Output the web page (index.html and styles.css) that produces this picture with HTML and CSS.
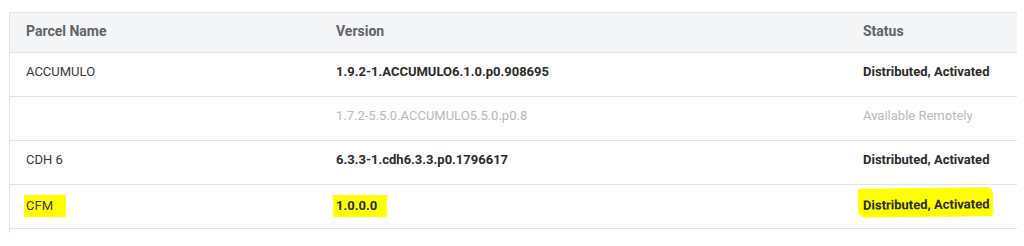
FILE: index.html
```html
<!DOCTYPE html>
<html>
<head>
<meta charset="utf-8">
<link rel="stylesheet" href="styles.css">
</head>
<body>
<div class="table">
  <div class="row head">
    <div class="cell">Parcel Name</div>
    <div class="cell">Version</div>
    <div class="cell">Status</div>
  </div>
  <div class="row">
    <div class="cell">ACCUMULO</div>
    <div class="cell strong">1.9.2-1.ACCUMULO6.1.0.p0.908695</div>
    <div class="cell strong">Distributed, Activated</div>
  </div>
  <div class="row muted">
    <div class="cell"></div>
    <div class="cell">1.7.2-5.5.0.ACCUMULO5.5.0.p0.8</div>
    <div class="cell">Available Remotely</div>
  </div>
  <div class="row">
    <div class="cell">CDH 6</div>
    <div class="cell strong">6.3.3-1.cdh6.3.3.p0.1796617</div>
    <div class="cell strong">Distributed, Activated</div>
  </div>
  <div class="row">
    <div class="cell"><span class="hl hl-name">CFM</span></div>
    <div class="cell strong"><span class="hl hl-ver">1.0.0.0</span></div>
    <div class="cell strong"><span class="hl hl-status">Distributed, Activated</span></div>
  </div>
  <div class="row tail"></div>
</div>
</body>
</html>
```

FILE: styles.css
```css
html, body {
  margin: 0;
  padding: 0;
  background: #ffffff;
}
body {
  padding: 12px 0 0 9px;
  font-family: Roboto, "Liberation Sans", Arial, sans-serif;
  font-size: 13px;
  color: #3a3a3a;
}
.table {
  width: 1007px;
  border-left: 1px solid #e2e2e2;
  border-top: 1px solid #e2e2e2;
}
.row {
  display: grid;
  grid-template-columns: 310px 527px 1fr;
  height: 43px;
  border-bottom: 1px solid #e2e2e2;
}
.row.head {
  height: 39px;
  background: #f4f5f6;
  color: #5f6368;
  font-weight: 700;
  font-size: 14px;
}
.row.tail {
  height: 4px;
  border-bottom: none;
}
.cell {
  padding: 11px 16px 0 16px;
  line-height: 16px;
  white-space: nowrap;
}
.head .cell {
  padding-top: 10px;
}
.strong {
  font-weight: 700;
  color: #2b2b2b;
}
.muted {
  color: #b9b9b9;
}
.hl {
  background: #ffff00;
  display: inline-block;
}
.hl-name {
  margin-left: -2px;
  margin-top: -1px;
  padding: 3px 13px 3px 2px;
}
.hl-ver {
  margin-left: -3px;
  margin-top: -1px;
  padding: 3px 10px 3px 3px;
}
.hl-status {
  margin-left: -5px;
  margin-top: -8px;
  padding: 9px 4px 4px 5px;
  border-radius: 2px 6px 3px 8px;
  transform: rotate(-0.6deg);
}
```
